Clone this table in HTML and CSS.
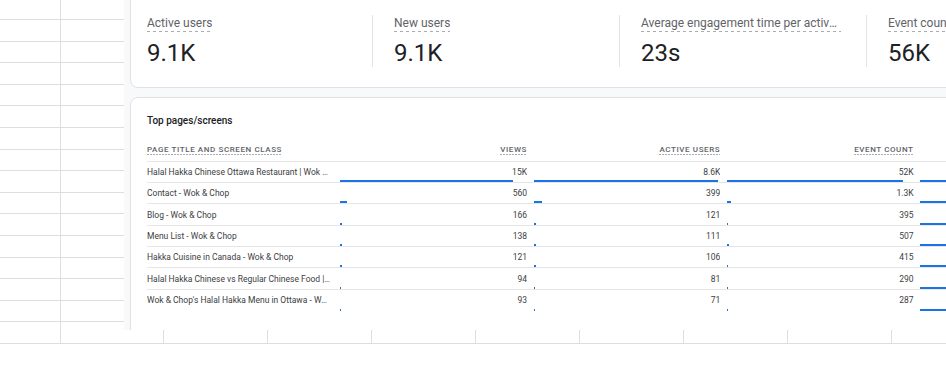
FILE: index.html
```html
<!DOCTYPE html>
<html lang="en">
<head>
<meta charset="utf-8">
<title>Top pages/screens</title>
<link rel="stylesheet" href="styles.css">
</head>
<body>
<div class="sheet">
<div></div><div></div><div></div><div></div><div></div><div></div><div></div><div></div><div></div><div></div>
<div></div><div></div><div></div><div></div><div></div><div></div><div></div><div></div><div></div><div></div>
<div></div><div></div><div></div><div></div><div></div><div></div><div></div><div></div><div></div><div></div>
<div></div><div></div><div></div><div></div><div></div><div></div><div></div><div></div><div></div><div></div>
<div></div><div></div><div></div><div></div><div></div><div></div><div></div><div></div><div></div><div></div>
<div></div><div></div><div></div><div></div><div></div><div></div><div></div><div></div><div></div><div></div>
<div></div><div></div><div></div><div></div><div></div><div></div><div></div><div></div><div></div><div></div>
<div></div><div></div><div></div><div></div><div></div><div></div><div></div><div></div><div></div><div></div>
<div></div><div></div><div></div><div></div><div></div><div></div><div></div><div></div><div></div><div></div>
<div></div><div></div><div></div><div></div><div></div><div></div><div></div><div></div><div></div><div></div>
<div></div><div></div><div></div><div></div><div></div><div></div><div></div><div></div><div></div><div></div>
<div></div><div></div><div></div><div></div><div></div><div></div><div></div><div></div><div></div><div></div>
<div></div><div></div><div></div><div></div><div></div><div></div><div></div><div></div><div></div><div></div>
<div></div><div></div><div></div><div></div><div></div><div></div><div></div><div></div><div></div><div></div>
<div></div><div></div><div></div><div></div><div></div><div></div><div></div><div></div><div></div><div></div>
<div></div><div></div><div></div><div></div><div></div><div></div><div></div><div></div><div></div><div></div>
</div>

<section class="embed">
  <div class="card metrics-card">
    <div class="metrics">
      <div class="metric"><span class="metric-label">Active users</span><span class="metric-value">9.1K</span></div>
      <div class="metric"><span class="metric-label">New users</span><span class="metric-value">9.1K</span></div>
      <div class="metric"><span class="metric-label">Average engagement time per active user</span><span class="metric-value">23s</span></div>
      <div class="metric"><span class="metric-label">Event count</span><span class="metric-value">56K</span></div>
    </div>
  </div>

  <div class="card table-card">
    <h2 class="table-title">Top pages/screens</h2>
    <div class="table">
      <div class="row head">
        <div class="cell title"><span class="head-label">Page title and screen class</span></div>
        <div class="cell num"><span class="head-label">Views</span></div>
        <div class="cell num"><span class="head-label">Active users</span></div>
        <div class="cell num"><span class="head-label">Event count</span></div>
        <div class="cell num"></div>
      </div>
      <div class="row">
        <div class="cell title"><span class="txt">Halal Hakka Chinese Ottawa Restaurant | Wok &amp; Chop</span></div>
        <div class="cell num"><span class="txt">15K</span><span class="bar" style="width:173px"></span></div>
        <div class="cell num"><span class="txt">8.6K</span><span class="bar" style="width:184px"></span></div>
        <div class="cell num"><span class="txt">52K</span><span class="bar" style="width:176px"></span></div>
        <div class="cell num"><span class="bar" style="width:170px"></span></div>
      </div>
      <div class="row">
        <div class="cell title"><span class="txt">Contact - Wok &amp; Chop</span></div>
        <div class="cell num"><span class="txt">560</span><span class="bar" style="width:6.4px"></span></div>
        <div class="cell num"><span class="txt">399</span><span class="bar" style="width:8.5px"></span></div>
        <div class="cell num"><span class="txt">1.3K</span><span class="bar" style="width:4.4px"></span></div>
        <div class="cell num"><span class="bar" style="width:137px"></span></div>
      </div>
      <div class="row">
        <div class="cell title"><span class="txt">Blog - Wok &amp; Chop</span></div>
        <div class="cell num"><span class="txt">166</span><span class="bar" style="width:1.9px"></span></div>
        <div class="cell num"><span class="txt">121</span><span class="bar" style="width:2.6px"></span></div>
        <div class="cell num"><span class="txt">395</span><span class="bar" style="width:1.3px"></span></div>
        <div class="cell num"><span class="bar" style="width:134px"></span></div>
      </div>
      <div class="row">
        <div class="cell title"><span class="txt">Menu List - Wok &amp; Chop</span></div>
        <div class="cell num"><span class="txt">138</span><span class="bar" style="width:1.6px"></span></div>
        <div class="cell num"><span class="txt">111</span><span class="bar" style="width:2.4px"></span></div>
        <div class="cell num"><span class="txt">507</span><span class="bar" style="width:1.7px"></span></div>
        <div class="cell num"><span class="bar" style="width:152px"></span></div>
      </div>
      <div class="row">
        <div class="cell title"><span class="txt">Hakka Cuisine in Canada - Wok &amp; Chop</span></div>
        <div class="cell num"><span class="txt">121</span><span class="bar" style="width:1.4px"></span></div>
        <div class="cell num"><span class="txt">106</span><span class="bar" style="width:2.3px"></span></div>
        <div class="cell num"><span class="txt">415</span><span class="bar" style="width:1.4px"></span></div>
        <div class="cell num"><span class="bar" style="width:140px"></span></div>
      </div>
      <div class="row">
        <div class="cell title"><span class="txt">Halal Hakka Chinese vs Regular Chinese Food | Wok &amp; Chop</span></div>
        <div class="cell num"><span class="txt">94</span><span class="bar" style="width:1.1px"></span></div>
        <div class="cell num"><span class="txt">81</span><span class="bar" style="width:1.7px"></span></div>
        <div class="cell num"><span class="txt">290</span><span class="bar" style="width:1px"></span></div>
        <div class="cell num"><span class="bar" style="width:143px"></span></div>
      </div>
      <div class="row">
        <div class="cell title"><span class="txt">Wok &amp; Chop's Halal Hakka Menu in Ottawa - Wok &amp; Chop</span></div>
        <div class="cell num"><span class="txt">93</span><span class="bar" style="width:1.1px"></span></div>
        <div class="cell num"><span class="txt">71</span><span class="bar" style="width:1.5px"></span></div>
        <div class="cell num"><span class="txt">287</span><span class="bar" style="width:1px"></span></div>
        <div class="cell num"><span class="bar" style="width:161px"></span></div>
      </div>
    </div>
  </div>
</section>
</body>
</html>
```

FILE: styles.css
```css
html, body {
  margin: 0;
  padding: 0;
  width: 946px;
  height: 382px;
  overflow: hidden;
  background: #ffffff;
  font-family: Roboto, "Liberation Sans", Arial, sans-serif;
}

body {
  position: relative;
}

/* spreadsheet behind the embed */
.sheet {
  display: grid;
  grid-template-columns: 61px 103px repeat(8, 104px);
  grid-template-rows: 20px repeat(15, 21.6px);
  width: 996px;
}

.sheet > div {
  box-sizing: border-box;
  border-right: 1px solid #dedede;
  border-bottom: 1px solid #dedede;
}

/* embedded report */
.embed {
  position: absolute;
  left: 124px;
  top: 0;
  width: 840px;
  height: 330px;
  box-sizing: border-box;
  padding-left: 6px;
  background: #f8f9fa;
  overflow: hidden;
  display: flex;
  flex-direction: column;
  gap: 9px;
}

.card {
  box-sizing: border-box;
  background: #ffffff;
  border: 1px solid #dfe1e5;
  border-radius: 8px;
  overflow: hidden;
  flex: none;
}

.metrics-card {
  margin-top: -20px;
  height: 108px;
  padding: 35px 0 0 16px;
}

.metrics {
  display: flex;
}

.metric {
  box-sizing: border-box;
  flex: none;
  width: 225px;
  height: 52px;
  margin-top: -1px;
  padding-top: 1px;
  display: flex;
  flex-direction: column;
}

.metric + .metric {
  width: 247px;
  border-left: 1px solid #e3e3e3;
  padding-left: 21px;
}

.metric-label {
  align-self: flex-start;
  max-width: 200px;
  font-size: 12px;
  line-height: 15px;
  padding-bottom: 1px;
  color: #5f6368;
  white-space: nowrap;
  overflow: hidden;
  text-overflow: ellipsis;
  background-image: linear-gradient(to right, #a8adb3 55%, transparent 55%);
  background-size: 6px 1px;
  background-repeat: repeat-x;
  background-position: left bottom;
}

.metric-value {
  margin-top: 7px;
  font-size: 24px;
  line-height: 28px;
  color: #202124;
}

.table-card {
  height: 260px;
  padding: 16.5px 0 0 16px;
}

.table-title {
  margin: 0 0 12.5px;
  font-size: 10px;
  line-height: 12px;
  font-weight: 500;
  color: #202124;
}

.row {
  display: grid;
  grid-template-columns: repeat(5, 193.3px);
  box-sizing: border-box;
  height: 21.4px;
  border-bottom: 1px solid #e6e6e6;
}

.row:last-child {
  border-bottom: none;
}

.row.head {
  height: 22.5px;
  padding-bottom: 6px;
}

.cell {
  display: flex;
  flex-direction: column;
  min-width: 0;
  padding-right: 6.6px;
}

.cell.title {
  padding-right: 9.5px;
}

.head .cell {
  justify-content: flex-end;
}

.head-label {
  align-self: flex-start;
  font-size: 8px;
  line-height: 9px;
  padding-bottom: 1px;
  font-weight: 500;
  letter-spacing: 0.6px;
  text-transform: uppercase;
  color: #5f6368;
  white-space: nowrap;
  background-image: linear-gradient(to right, #a8adb3 60%, transparent 60%);
  background-size: 3px 1px;
  background-repeat: repeat-x;
  background-position: left bottom;
}

.num .head-label {
  align-self: flex-end;
}

.txt {
  margin-top: 5.4px;
  font-size: 8.5px;
  line-height: 10px;
  color: #3c4043;
  white-space: nowrap;
  overflow: hidden;
  text-overflow: ellipsis;
}

.num .txt {
  text-align: right;
}

.bar {
  margin-top: auto;
  height: 2px;
  background: #1a73e8;
}
```
